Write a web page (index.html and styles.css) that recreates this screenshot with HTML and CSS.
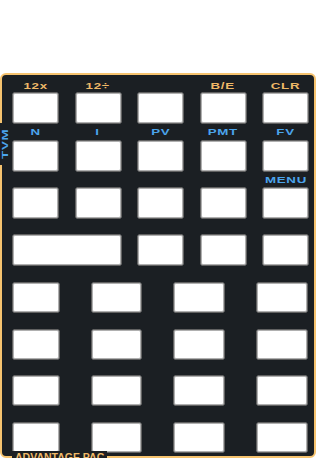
FILE: index.html
```html
<!DOCTYPE html>
<html lang="en">
<head>
    <meta charset="UTF-8">
    <meta name="viewport" content="width=device-width, initial-scale=1.0">
    <title>Advantage Pac - TVM keypad</title>
    <link rel="stylesheet" href="styles.css">
</head>
<body>

    <div class="pad">
        <div class="tab"><span>TVM</span></div>

        <div class="top-keys">
            <div class="label-row first">
                <span class="lbl gold">12x</span>
                <span class="lbl gold">12÷</span>
                <span></span>
                <span class="lbl gold">B/E</span>
                <span class="lbl gold">CLR</span>
            </div>
            <div class="key-row">
                <button class="key"></button>
                <button class="key"></button>
                <button class="key"></button>
                <button class="key"></button>
                <button class="key"></button>
            </div>
            <div class="label-row mid">
                <span class="lbl blue">N</span>
                <span class="lbl blue">I</span>
                <span class="lbl blue">PV</span>
                <span class="lbl blue">PMT</span>
                <span class="lbl blue">FV</span>
            </div>
            <div class="key-row">
                <button class="key"></button>
                <button class="key"></button>
                <button class="key"></button>
                <button class="key"></button>
                <button class="key"></button>
            </div>
            <div class="label-row low">
                <span></span>
                <span></span>
                <span></span>
                <span></span>
                <span class="lbl blue">MENU</span>
            </div>
            <div class="key-row">
                <button class="key"></button>
                <button class="key"></button>
                <button class="key"></button>
                <button class="key"></button>
                <button class="key"></button>
            </div>
            <div class="key-row spaced">
                <button class="key wide"></button>
                <button class="key"></button>
                <button class="key"></button>
                <button class="key"></button>
            </div>
        </div>

        <div class="num-keys">
            <button class="key"></button>
            <button class="key"></button>
            <button class="key"></button>
            <button class="key"></button>
            <button class="key"></button>
            <button class="key"></button>
            <button class="key"></button>
            <button class="key"></button>
            <button class="key"></button>
            <button class="key"></button>
            <button class="key"></button>
            <button class="key"></button>
            <button class="key"></button>
            <button class="key"></button>
            <button class="key"></button>
            <button class="key"></button>
        </div>

        <span class="brand">ADVANTAGE PAC</span>
    </div>

</body>
</html>
```

FILE: styles.css
```css
/* keypad of the calculator */
html, body {
    overflow: hidden;
}

body {
    margin: 0;
    padding: 0;
    background: #ffffff;
    font-family: 'Liberation Sans', Arial, sans-serif;
}

.pad {
    position: relative;
    box-sizing: border-box;
    width: 316px;
    height: 385px;
    margin-top: 73px;
    padding: 5px 0 0 10px;
    background: #1b1f23;
    border: 2px solid #f6c36f;
    border-radius: 6px;
}

/* side tab sitting on the left border */
.tab {
    position: absolute;
    left: -2px;
    top: 48px;
    width: 9px;
    height: 42px;
    background: #1b1f23;
    display: flex;
    align-items: center;
    justify-content: center;
}

.tab span {
    writing-mode: vertical-rl;
    transform: rotate(180deg) scaleY(1.4);
    font-size: 9.5px;
    font-weight: 700;
    line-height: 9px;
    letter-spacing: 0.5px;
    color: #4ba4ec;
}

.label-row,
.key-row {
    display: grid;
    grid-template-columns: repeat(5, 47px);
    column-gap: 15.5px;
}

.label-row {
    justify-items: center;
    align-items: center;
}

.label-row.first { height: 12px; }
.label-row.mid { height: 16px; }
.label-row.low { height: 15px; }

.lbl {
    display: inline-block;
    font-size: 9.5px;
    font-weight: 700;
    line-height: 12px;
    letter-spacing: 0.5px;
    transform: scaleX(1.4);
}

.gold { color: #efb968; }
.blue { color: #4ba4ec; }

.key-row {
    height: 32px;
}

.key-row.spaced {
    margin-top: 15px;
}

.key {
    display: block;
    width: 100%;
    height: 100%;
    padding: 0;
    background: #ffffff;
    border: 1px solid #616161;
    border-radius: 3px;
    box-shadow: inset 0 0 0 1px #b0b0b0;
    cursor: pointer;
}

.key.wide {
    grid-column: span 2;
}

.num-keys {
    display: grid;
    grid-template-columns: 48px 51px 52px 52px;
    grid-auto-rows: 31px;
    column-gap: 31px;
    row-gap: 15.5px;
    margin-top: 16px;
}

/* name printed over the bottom border */
.brand {
    position: absolute;
    left: 10px;
    bottom: -7px;
    padding: 0 3px;
    background: #1b1f23;
    font-size: 10.5px;
    font-weight: 700;
    line-height: 12px;
    color: #efb968;
}
```
